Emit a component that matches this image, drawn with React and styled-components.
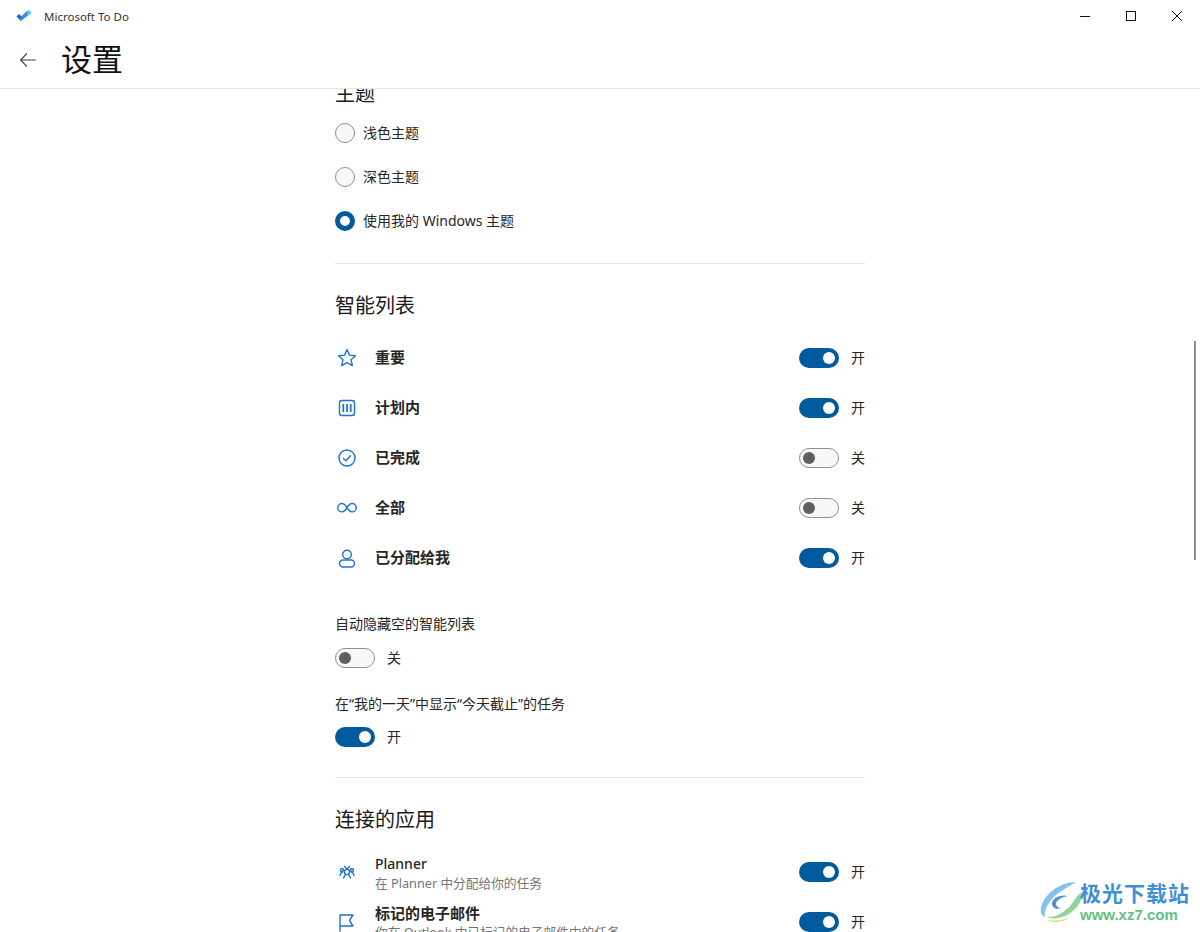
import React from "react";
import styled, { createGlobalStyle } from "styled-components";

const FONT = `"Noto Sans", "Noto Sans CJK SC", sans-serif`;
const BLUE = "#005a9e";
const ICON = "#1f74c9";

const Global = createGlobalStyle`
  html, body { margin: 0; padding: 0; height: 100%; background: #fff; overflow: hidden; }
  body { font-family: ${FONT}; color: #1a1a1a; }
  * { box-sizing: border-box; }
`;

const Page = styled.div`
  position: relative;
  width: 1200px;
  height: 932px;
  display: flex;
  flex-direction: column;
  overflow: hidden;
  background: #fff;
`;

const TitleBar = styled.div`
  height: 33px;
  flex: none;
  display: flex;
  align-items: center;
  padding-left: 16px;
`;
const AppName = styled.span`
  margin-left: 12px;
  font-size: 11.5px;
  color: #333;
`;
const WinButtons = styled.div`
  margin-left: auto;
  display: flex;
  align-self: stretch;
`;
const WinButton = styled.div`
  width: 46px;
  height: 32px;
  display: flex;
  align-items: center;
  justify-content: center;
`;

const Header = styled.header`
  height: 56px;
  flex: none;
  display: flex;
  align-items: center;
  padding: 0 0 2px 19px;
  border-bottom: 1px solid #e6e6e6;
`;
const Title = styled.h1`
  margin: 0 0 2px 24px;
  font-size: 31px;
  line-height: 40px;
  font-weight: 400;
  color: #111;
`;

const Scroll = styled.main`
  flex: 1;
  overflow: hidden;
`;
const Column = styled.div`
  width: 530px;
  margin: -7px 0 0 335px;
`;
const ThemeHeading = styled.h2`
  margin: 0;
  height: 24px;
  font-size: 20px;
  line-height: 24px;
  font-weight: 400;
`;
const RadioList = styled.div`
  margin-top: 5px;
  padding-bottom: 20px;
  border-bottom: 1px solid #e6e6e6;
`;
const RadioRow = styled.div`
  height: 44px;
  display: flex;
  align-items: center;
  gap: 8px;
  font-size: 14px;
  color: #262626;
`;
const RadioText = styled.span`
  padding-bottom: 2px;
`;
const RadioDot = styled.span`
  width: 20px;
  height: 20px;
  border-radius: 50%;
  background: ${(p) => (p.$on ? "#fff" : "#f8f8f8")};
  border: ${(p) => (p.$on ? `5px solid ${BLUE}` : "1px solid #8f8f8f")};
`;
const Heading = styled.h2`
  margin: 0;
  font-size: 20px;
  line-height: 28px;
  font-weight: 400;
  color: #1a1a1a;
`;
const Section = styled.section`
  padding-top: 28px;
`;
const ListRows = styled.div`
  margin-top: 13px;
`;
const Row = styled.div`
  height: 50px;
  display: flex;
  align-items: center;
`;
const IconSlot = styled.div`
  width: 40px;
  flex: none;
  display: flex;
  align-items: center;
  padding-left: 2px;
`;
const RowText = styled.div`
  flex: 1;
  min-width: 0;
  padding-top: ${(p) => p.$top || 0}px;
  padding-bottom: ${(p) => p.$bottom || 0}px;
`;
const RowLabel = styled.div`
  font-size: ${(p) => (p.$medium ? 14 : 15)}px;
  line-height: 20px;
  font-weight: ${(p) => (p.$medium ? 500 : 700)};
  color: #262626;
`;
const RowSub = styled.div`
  font-size: 12.7px;
  line-height: 19px;
  color: #767676;
  white-space: nowrap;
`;
const ToggleWrap = styled.div`
  display: flex;
  align-items: center;
  gap: 12px;
  height: 20px;
  font-size: 14px;
  line-height: 20px;
  color: #262626;
`;
const Track = styled.span`
  width: 40px;
  height: 20px;
  border-radius: 10px;
  display: flex;
  align-items: center;
  padding: 0 ${(p) => (p.$on ? 4 : 3)}px;
  justify-content: ${(p) => (p.$on ? "flex-end" : "flex-start")};
  background: ${(p) => (p.$on ? BLUE : "#f8f8f8")};
  border: ${(p) => (p.$on ? "none" : "1px solid #8f8f8f")};
`;
const Knob = styled.span`
  width: 12px;
  height: 12px;
  border-radius: 50%;
  background: ${(p) => (p.$on ? "#fff" : "#5f5f5f")};
`;
const Option = styled.div`
  margin-top: ${(p) => p.$top}px;
`;
const OptionLabel = styled.div`
  font-size: 14px;
  line-height: 20px;
  color: #262626;
  margin-bottom: ${(p) => p.$gap}px;
`;
const Rule = styled.div`
  height: 1px;
  background: #e6e6e6;
  margin-top: 30px;
`;
const Scrollbar = styled.div`
  position: absolute;
  left: 1194px;
  top: 341px;
  width: 2px;
  height: 219px;
  background: #8c8c8c;
`;
const Watermark = styled.div`
  position: absolute;
  left: 1040px;
  top: 880px;
  width: 156px;
  height: 44px;
  display: flex;
`;
const WmText = styled.div`
  margin-left: -4px;
  display: flex;
  flex-direction: column;
`;
const WmName = styled.span`
  font-size: 21px;
  line-height: 26px;
  letter-spacing: 1px;
  font-weight: 700;
  color: #3d8fd8;
  white-space: nowrap;
`;
const WmUrl = styled.span`
  font-size: 15px;
  line-height: 18px;
  font-weight: 700;
  color: #63c07f;
  font-family: "Liberation Sans", sans-serif;
`;

const Toggle = ({ on }) => (
  <ToggleWrap>
    <Track $on={on}><Knob $on={on} /></Track>
    <span>{on ? "开" : "关"}</span>
  </ToggleWrap>
);

const Ic = ({ children }) => (
  <svg width="20" height="20" viewBox="0 0 20 20" fill="none" stroke={ICON} strokeWidth="1.4" strokeLinejoin="round" strokeLinecap="round">
    {children}
  </svg>
);

const Star = () => <Ic><path d="M10 1.5l2.5 5.6 6 .6-4.5 4 1.3 6L10 14.6l-5.3 3.1 1.3-6-4.5-4 6-.6z" /></Ic>;
const Planned = () => <Ic><rect x="2.5" y="2.5" width="15" height="15" rx="2.5" /><path d="M6.300 6v8M10 6v8M13.700 6v8" strokeWidth="1.700" strokeLinecap="butt" /></Ic>;
const Done = () => <Ic><circle cx="10" cy="10" r="8" /><path d="M6.5 10.5l2.5 2.3 4.5-5" /></Ic>;
const Infinity = () => <Ic><path d="M10 9.700C8.600 7.300 7 5.500 5 5.500a4.200 4.200 0 000 8.400c2 0 3.600-1.800 5-4.200zm0 0c1.400 2.400 3 4.200 5 4.200a4.200 4.200 0 000-8.400c-2 0-3.600 1.800-5 4.200z" /></Ic>;
const Person = () => <Ic><circle cx="10" cy="6.500" r="4.300" /><rect x="2.500" y="12" width="15" height="7" rx="3.500" /></Ic>;
const PlannerIc = () => (
  <Ic>
    <circle cx="10" cy="10" r="2.6" />
    <circle cx="5" cy="8" r="1.5" /><circle cx="15" cy="8" r="1.5" />
    <path d="M7.5 4.5L10 7l2.5-2.5M3 13.5c.3-2 1.2-3 2.5-3.5M17 13.5c-.3-2-1.200-3-2.500-3.500M6.500 16l2-3.500M13.500 16l-2-3.500" />
  </Ic>
);
const Flag = () => <Ic><path d="M3 19V3h13l-3.500 5.500L16 14H3" /></Ic>;

const smart = [
  ["重要", Star, true],
  ["计划内", Planned, true],
  ["已完成", Done, false],
  ["全部", Infinity, false],
  ["已分配给我", Person, true],
];

export default function App() {
  return (
    <Page>
      <Global />
      <TitleBar>
        <svg width="16" height="13" viewBox="0 0 16 13">
          <path d="M0.500 6.500L3 4l3.500 3.500L5 11z" fill="#1f5fb8" />
          <path d="M5 11L3.500 8 11 1l1.800-.6L15.500 2.500z" fill="#2f8fe8" />
          <path d="M11.500 1l2 -0.500 2 2L11 7z" fill="#6cc0f5" />
        </svg>
        <AppName>Microsoft To Do</AppName>
        <WinButtons>
          <WinButton>
            <svg width="10" height="10" viewBox="0 0 10 10"><path d="M0 5.500h10" stroke="#111" /></svg>
          </WinButton>
          <WinButton>
            <svg width="10" height="10" viewBox="0 0 10 10"><rect x=".5" y=".5" width="9" height="9" fill="none" stroke="#111" /></svg>
          </WinButton>
          <WinButton>
            <svg width="10" height="10" viewBox="0 0 10 10"><path d="M0 0l10 10M10 0L0 10" stroke="#111" /></svg>
          </WinButton>
        </WinButtons>
      </TitleBar>
      <Header>
        <svg width="18" height="16" viewBox="0 0 18 16" fill="none" stroke="#444" strokeWidth="1.100">
          <path d="M17 8H1.500M8 1.500L1.500 8 8 14.500" />
        </svg>
        <Title>设置</Title>
      </Header>
      <Scroll>
        <Column>
          <ThemeHeading>主题</ThemeHeading>
          <RadioList>
            <RadioRow><RadioDot /><RadioText>浅色主题</RadioText></RadioRow>
            <RadioRow><RadioDot /><RadioText>深色主题</RadioText></RadioRow>
            <RadioRow><RadioDot $on /><RadioText>使用我的 Windows 主题</RadioText></RadioRow>
          </RadioList>
          <Section>
            <Heading>智能列表</Heading>
            <ListRows>
              {smart.map(([label, I, on]) => (
                <Row key={label}>
                  <IconSlot><I /></IconSlot>
                  <RowText $bottom={2}><RowLabel>{label}</RowLabel></RowText>
                  <Toggle on={on} />
                </Row>
              ))}
            </ListRows>
            <Option $top={31}>
              <OptionLabel $gap={14}>自动隐藏空的智能列表</OptionLabel>
              <Toggle on={false} />
            </Option>
            <Option $top={26}>
              <OptionLabel $gap={13}>在“我的一天”中显示“今天截止”的任务</OptionLabel>
              <Toggle on />
            </Option>
            <Rule />
          </Section>
          <Section>
            <Heading>连接的应用</Heading>
            <ListRows>
              <Row>
                <IconSlot><PlannerIc /></IconSlot>
                <RowText $top={2}>
                  <RowLabel $medium>Planner</RowLabel>
                  <RowSub>在 Planner 中分配给你的任务</RowSub>
                </RowText>
                <Toggle on />
              </Row>
              <Row>
                <IconSlot><Flag /></IconSlot>
                <RowText>
                  <RowLabel>标记的电子邮件</RowLabel>
                  <RowSub>你在 Outlook 中已标记的电子邮件中的任务</RowSub>
                </RowText>
                <Toggle on />
              </Row>
            </ListRows>
          </Section>
        </Column>
      </Scroll>
      <Scrollbar />
      <Watermark>
        <svg width="44" height="44" viewBox="0 0 44 44" fill="none">
          <path d="M36 2C20 2 4 14 1 28c-1 5 1 8 4 9-2-8 6-20 18-27 5-3 9-6 13-8z" fill="#7fc4ee" />
          <path d="M42 12c2 10-10 24-24 26-5 1-9 0-11-1 10 1 22-7 28-18 2-3 4-5 7-7z" fill="#8fd39a" />
          <path d="M30 38c-8 5-18 5-24 2 8 1 16 0 24-2z" fill="#e8e070" />
          <path d="M28 16c-8-2-16 2-16 8 0 4 5 6 9 4-3 0-5-2-5-4 0-4 6-7 12-8z" fill="#4f8fd0" />
        </svg>
        <WmText>
          <WmName>极光下载站</WmName>
          <WmUrl>www.xz7.com</WmUrl>
        </WmText>
      </Watermark>
    </Page>
  );
}
